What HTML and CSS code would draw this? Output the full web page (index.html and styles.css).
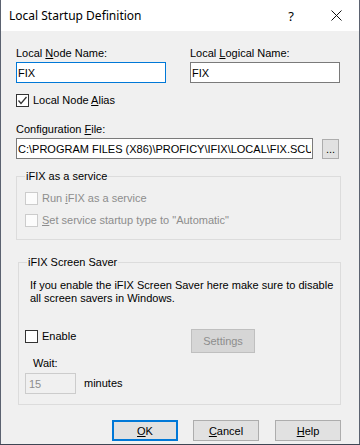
FILE: index.html
```html
<!doctype html>
<html lang="en">
  <head>
    <meta charset="UTF-8" />
    <title>Local Startup Definition</title>
    <link rel="stylesheet" href="styles.css">
  </head>
  <body>
    <div class="window">
      <div class="title-bar">
        <span class="title">Local Startup Definition</span>
        <span class="help-q">?</span>
        <svg class="close-x" width="11" height="11" viewBox="0 0 11 11">
          <path d="M0.5 0.5 L10.5 10.5 M10.5 0.5 L0.5 10.5" stroke="#111" stroke-width="1" fill="none" />
        </svg>
      </div>

      <div class="content">
        <div class="name-row">
          <div class="field">
            <label>Local <u>N</u>ode Name:</label>
            <input class="text-box focused" type="text" value="FIX" />
          </div>
          <div class="field">
            <label>Local <u>L</u>ogical Name:</label>
            <input class="text-box" type="text" value="FIX" />
          </div>
        </div>

        <div class="check-row alias-row">
          <span class="check-box checked">
            <svg width="11" height="11" viewBox="0 0 11 11">
              <path d="M1.5 5.5 L4 8.5 L9.5 2" stroke="#333" stroke-width="1.3" fill="none" />
            </svg>
          </span>
          <span>Local Node <u>A</u>lias</span>
        </div>

        <label class="config-label">Configuration <u>F</u>ile:</label>
        <div class="config-row">
          <input class="text-box config-box" type="text" value="C:\PROGRAM FILES (X86)\PROFICY\IFIX\LOCAL\FIX.SCU" />
          <button class="browse-btn">...</button>
        </div>

        <!-- service group -->
        <div class="group service-group">
          <div class="group-title">iFIX as a service</div>
          <div class="check-row disabled first">
            <span class="check-box"></span>
            <span>Run <u>i</u>FIX as a service</span>
          </div>
          <div class="check-row disabled second">
            <span class="check-box"></span>
            <span><u>S</u>et service startup type to "Automatic"</span>
          </div>
        </div>

        <!-- screen saver group -->
        <div class="group saver-group">
          <div class="group-title">iFIX Screen Saver</div>
          <p class="saver-note">If you enable the iFIX Screen Saver here make sure to disable<br>all screen savers in Windows.</p>
          <div class="enable-row">
            <div class="check-row">
              <span class="check-box"></span>
              <span>Enable</span>
            </div>
            <button class="btn settings-btn" disabled>Settings</button>
          </div>
          <div class="wait-label">Wait:</div>
          <div class="wait-row">
            <input class="text-box wait-box" type="text" value="15" disabled />
            <span>minutes</span>
          </div>
        </div>

        <div class="footer">
          <button class="btn default-btn"><u>O</u>K</button>
          <button class="btn"><u>C</u>ancel</button>
          <button class="btn"><u>H</u>elp</button>
        </div>
      </div>
    </div>
  </body>
</html>
```

FILE: styles.css
```css
body {
  margin: 0;
  background-color: #3f4654;
  font-family: "Liberation Sans", Arial, sans-serif;
  font-size: 11px;
  color: #000;
}
.window {
  width: 358px;
  height: 444px;
  border-left: 1px solid #5b6270;
  border-right: 1px solid #5b6270;
  background-color: #f0f0f0;
}
.title-bar {
  height: 31px;
  background-color: #fff;
  display: flex;
  align-items: center;
}
.title {
  font-family: "Noto Sans", sans-serif;
  font-size: 12px;
  margin-left: 8px;
  flex: 1;
}
.help-q {
  font-family: "Noto Sans", sans-serif;
  font-size: 13px;
  margin-right: 37px;
}
.close-x {
  margin-right: 17px;
}
.content {
  padding: 16px 18px 0 15px;
}
label,
.group-title,
.check-row,
.wait-label,
.wait-row,
.saver-note {
  line-height: 13px;
}
u {
  text-decoration-thickness: 1px;
  text-underline-offset: 1px;
}
.name-row {
  display: flex;
  gap: 24px;
}
.field {
  display: flex;
  flex-direction: column;
  width: 150px;
}
.field label {
  margin-bottom: 2px;
}
.text-box {
  box-sizing: border-box;
  height: 21px;
  margin: 0;
  padding: 0 1px;
  border: 1px solid #7a7a7a;
  background: #fff;
  font-family: "Liberation Sans", Arial, sans-serif;
  font-size: 11px;
  color: #000;
  outline: none;
}
.text-box.focused {
  border-color: #0078d7;
}
.check-row {
  display: flex;
  align-items: center;
  gap: 4px;
  height: 13px;
}
.check-box {
  box-sizing: border-box;
  width: 13px;
  height: 13px;
  border: 1px solid #333;
  background: #fff;
  display: flex;
  align-items: center;
  justify-content: center;
}
.alias-row {
  margin-top: 11px;
}
.config-label {
  display: block;
  margin-top: 16px;
  margin-bottom: 2px;
}
.config-row {
  display: flex;
  align-items: center;
}
.config-box {
  width: 297px;
}
.browse-btn {
  box-sizing: border-box;
  width: 17px;
  height: 20px;
  margin-left: 9px;
  padding: 0;
  border: 1px solid #adadad;
  background: #e1e1e1;
  font-family: "Liberation Sans", Arial, sans-serif;
  font-size: 11px;
  line-height: 14px;
}
.group {
  border: 1px solid #dcdcdc;
  padding-left: 8px;
}
.group-title {
  display: table;
  margin: -7px 0 0 0;
  padding: 0 1px;
  background-color: #f0f0f0;
}
.service-group {
  margin-top: 17px;
  padding-bottom: 12px;
}
.service-group .first {
  margin-top: 9px;
}
.service-group .second {
  margin-top: 9px;
}
.disabled {
  color: #8d8d8d;
}
.disabled .check-box {
  border-color: #cccccc;
  background: #fcfcfc;
}
.saver-group {
  margin-top: 22px;
  margin-left: 2px;
  padding-left: 6px;
  padding-bottom: 10px;
}
.saver-group .group-title {
  margin-left: 2px;
}
.saver-note {
  margin: 10px 0 0 5px;
}
.enable-row {
  display: flex;
  align-items: flex-start;
  margin-top: 24px;
}
.enable-row .check-row {
  margin-top: 1px;
  width: 166px;
}
.btn {
  box-sizing: border-box;
  width: 66px;
  height: 21px;
  padding: 0;
  border: 1px solid #adadad;
  background: #e1e1e1;
  font-family: "Liberation Sans", Arial, sans-serif;
  font-size: 11px;
  color: #000;
}
.settings-btn {
  width: 64px;
  height: 24px;
  border-color: #bfbfbf;
  background: #d6d6d6;
  color: #8d8d8d;
}
.wait-label {
  margin: 4px 0 0 8px;
}
.wait-row {
  display: flex;
  align-items: center;
  gap: 8px;
  margin-top: 3px;
}
.wait-box {
  width: 51px;
  border-color: #cccccc;
  background: #f0f0f0;
  color: #8d8d8d;
  padding-left: 3px;
}
.footer {
  display: flex;
  justify-content: flex-end;
  gap: 15px;
  margin-top: 15px;
}
.default-btn {
  border: 2px solid #0078d7;
}
.footer .btn:last-child {
  margin-left: 1px;
}
```
